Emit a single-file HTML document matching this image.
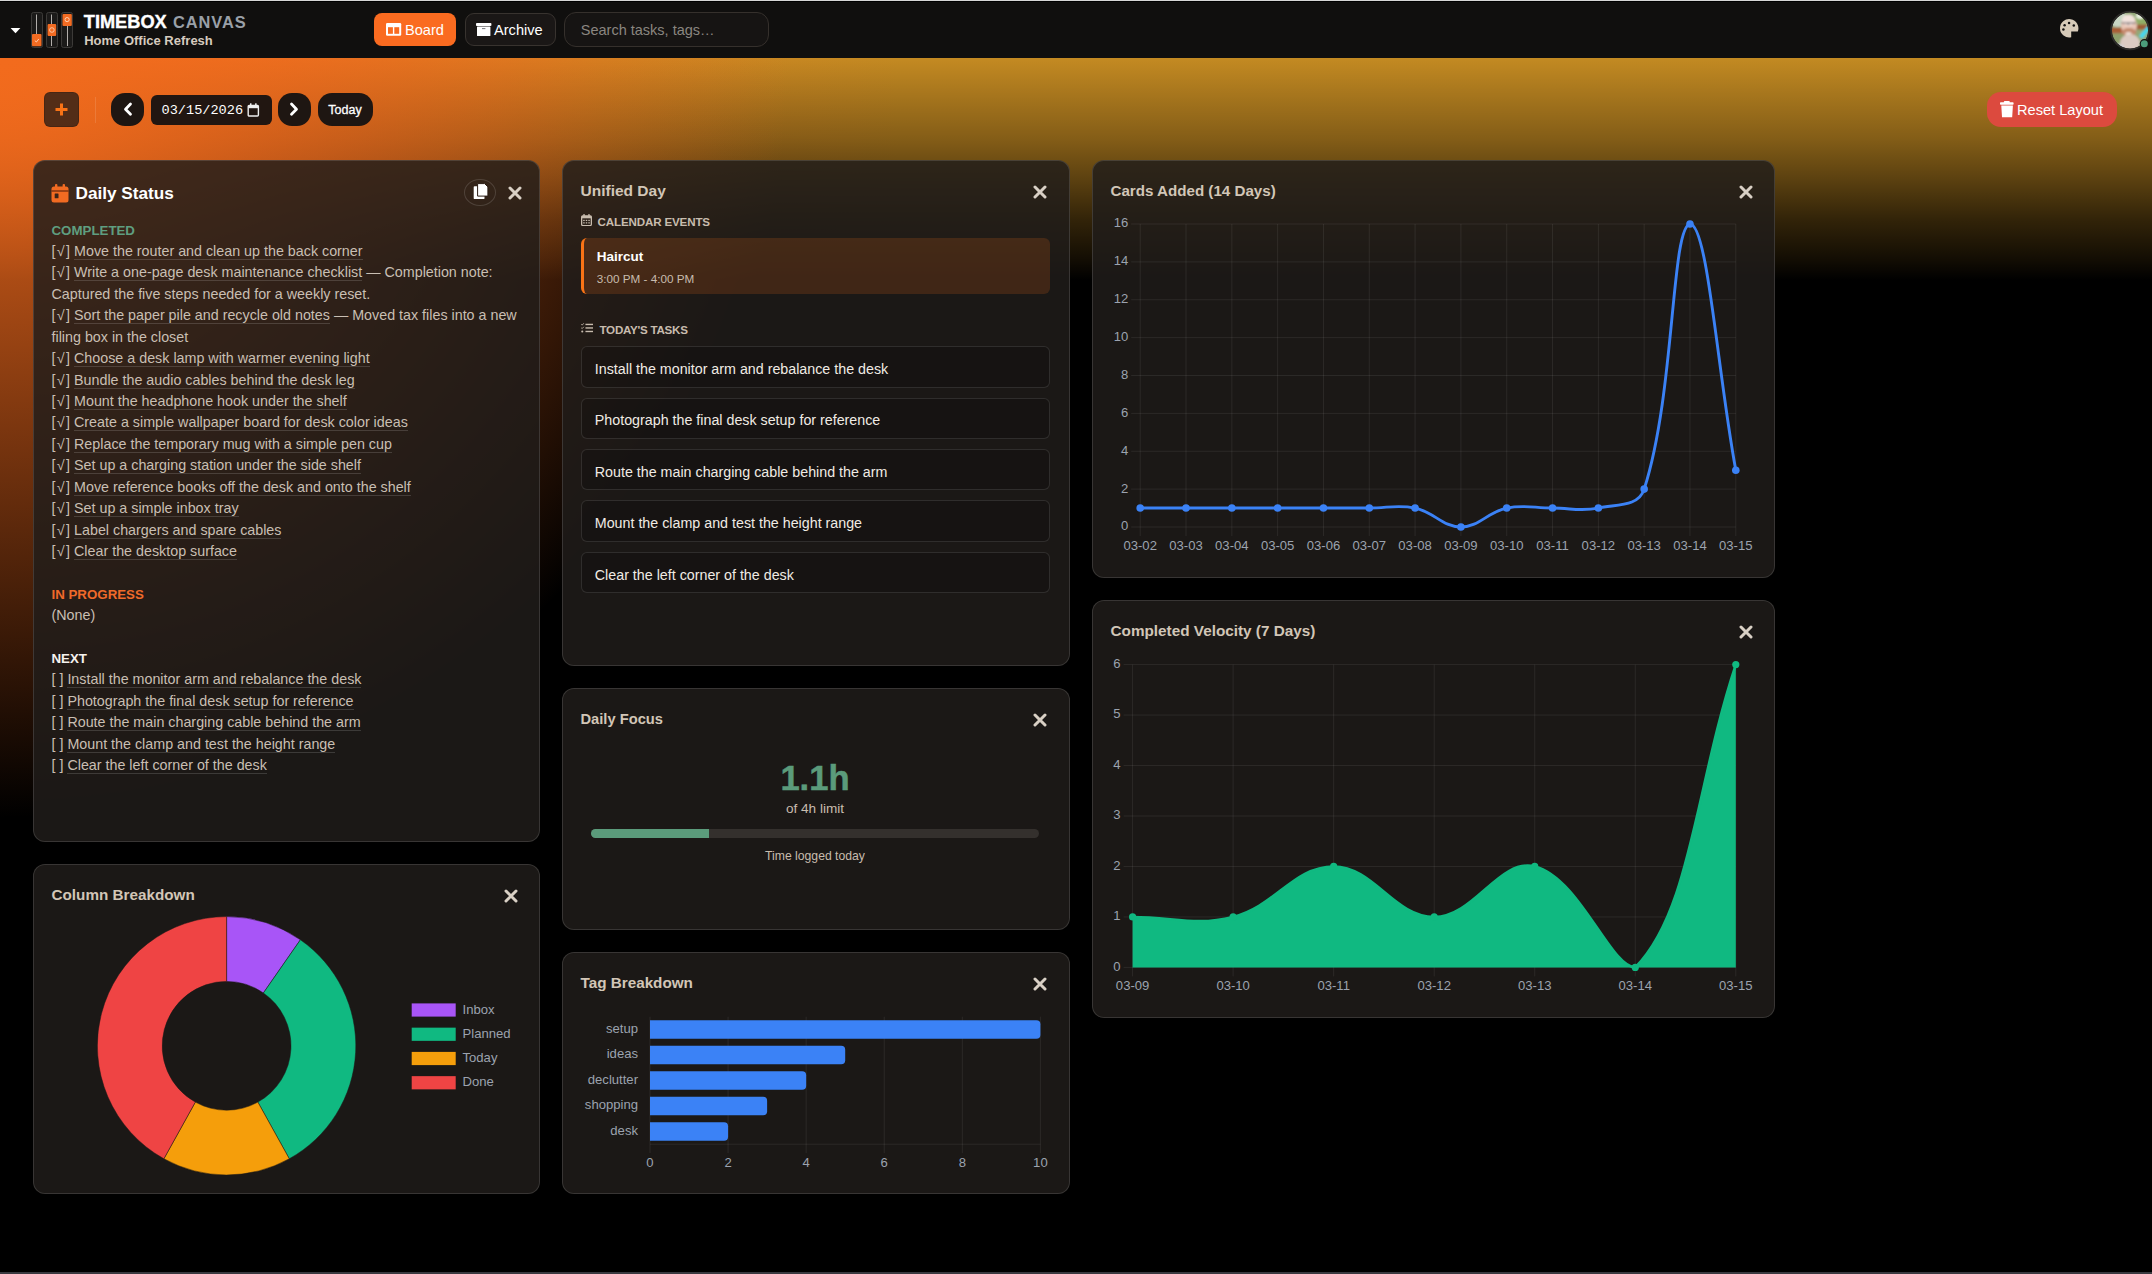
<!DOCTYPE html>
<html><head><meta charset="utf-8">
<style>
*{box-sizing:border-box;margin:0;padding:0}
html,body{width:2152px;height:1274px;overflow:hidden;background:#000;font-family:"Liberation Sans", sans-serif}
#bg{position:absolute;left:0;top:58px;width:2152px;height:1216px;
 background:
  radial-gradient(ellipse 790px 760px at 0px 0px, rgba(242,107,29,1) 0%, rgba(240,105,29,0.5) 50%, rgba(240,105,29,0) 100%),
  linear-gradient(to bottom, rgba(0,0,0,0) 0px, rgba(0,0,0,0.14) 35px, rgba(0,0,0,0.32) 80px, rgba(0,0,0,0.53) 121px, rgba(0,0,0,0.74) 161px, rgba(0,0,0,0.9) 201px, #000 222px),
  linear-gradient(to right, #f26b1d 0px, #e27421 300px, #cf8421 600px, #c48a22 900px, #c28a22 2152px);
}
#topline{position:absolute;left:0;top:0;width:2152px;height:1px;background:#d6d6d6}
#hdr{position:absolute;left:0;top:1px;width:2152px;height:57px;background:#100f0e;border-top:1px solid #000}
#botline{position:absolute;left:0;top:1272px;width:2152px;height:2px;background:#3a3a40}
.abs{position:absolute}
.panel{position:absolute;border-radius:12px;background:rgba(33,29,26,0.83);box-shadow:inset 0 0 0 1px rgba(255,255,255,0.13)}
.ptitle{position:absolute;left:18.5px;top:20.8px;font-size:15.2px;font-weight:bold;color:#d2c6b7;white-space:nowrap;line-height:20px}
.xi{position:absolute}
.ct{font-family:"Liberation Sans", sans-serif;font-size:13.1px;fill:#9ca3af}
#status{position:absolute;left:18.5px;top:59.6px;width:480px;color:#c9bfb3;font-size:14.3px}
.ln{height:21.43px;line-height:21.43px;white-space:nowrap}
.ln u{text-decoration:none;border-bottom:1px solid rgba(255,255,255,0.15);padding-bottom:0px}
.ck{display:inline-block;width:10.6px;text-align:center}
.sec{font-weight:bold;font-size:13.3px}
.g{color:#5f9e80}.o{color:#f06a2a}.w{color:#f5f2ee}
.task{position:absolute;left:19px;width:469px;height:41.4px;border:1px solid rgba(255,255,255,0.11);border-radius:6px;background:rgba(0,0,0,0.18);
 font-size:14.28px;color:#f0ebe4;padding-left:12.8px;padding-top:11.9px;line-height:20px;white-space:nowrap}
.btn{position:absolute;display:flex;align-items:center;justify-content:center}
</style></head><body>
<div id="bg"></div>
<div id="topline"></div>
<div id="hdr"></div>

<!-- header content -->
<svg class="abs" style="left:0;top:0" width="300" height="58" viewBox="0 0 300 58">
 <path d="M10.6 28 L20.4 28 L15.5 33.3 Z" fill="#fff"/>
 <g stroke="#3c3a38" stroke-width="1" fill="#1b1a19">
  <rect x="31.5" y="12.5" width="11" height="35" rx="2"/>
  <rect x="46.5" y="12.5" width="11" height="35" rx="2"/>
  <rect x="61.5" y="12.5" width="11" height="35" rx="2"/>
 </g>
 <g stroke="#c4c0bc" stroke-width="0.9">
  <line x1="36.5" y1="14.5" x2="36.5" y2="46"/>
  <line x1="51.5" y1="14.5" x2="51.5" y2="46"/>
  <line x1="67.5" y1="14.5" x2="67.5" y2="46"/>
 </g>
 <rect x="32" y="34" width="9.5" height="12.3" rx="1" fill="#f26b22"/>
 <path d="M34.8 40.6 L36.4 42 L38.8 39" stroke="#ffd9c0" stroke-width="0.9" fill="none"/>
 <rect x="47.6" y="24" width="8.6" height="12" rx="1" fill="#f26b22"/>
 <circle cx="51.9" cy="30" r="2.3" stroke="#ffd9c0" stroke-width="0.8" fill="none"/>
 <rect x="62.5" y="13.9" width="9.3" height="12" rx="1" fill="#f26b22"/>
 <circle cx="67.1" cy="19.6" r="2.1" stroke="#ffd9c0" stroke-width="0.9" fill="none"/>
</svg>
<div class="abs" style="left:83.8px;top:11.6px;font-size:18.2px;font-weight:bold;color:#fff;letter-spacing:0px;-webkit-text-stroke:0.4px #fff;line-height:20px;white-space:nowrap">TIMEBOX</div>
<div class="abs" style="left:173px;top:11.8px;font-size:16.4px;font-weight:bold;color:#9aa0a8;letter-spacing:0.94px;line-height:20px;white-space:nowrap">CANVAS</div>
<div class="abs" style="left:84.2px;top:33px;font-size:13px;font-weight:bold;color:#d6cbbf;line-height:16px;white-space:nowrap">Home Office Refresh</div>

<div class="abs" style="left:374px;top:13px;width:82px;height:33px;border-radius:8px;background:#fa6b20"></div>
<svg class="abs" style="left:385.8px;top:23px" width="16" height="13" viewBox="0 0 16 13"><rect x="0" y="0" width="15.2" height="12.7" rx="1.2" fill="#fff"/><rect x="2" y="4.2" width="4.9" height="6.6" fill="#fa6b20"/><rect x="8.3" y="4.2" width="4.9" height="6.6" fill="#fa6b20"/></svg>
<div class="abs" style="left:405px;top:20.8px;font-size:14.6px;color:#fff;line-height:18px">Board</div>

<div class="abs" style="left:465px;top:13px;width:91px;height:33px;border-radius:9px;background:#1a1716;border:1px solid #38332f"></div>
<svg class="abs" style="left:476.4px;top:23px" width="16" height="14" viewBox="0 0 16 14"><rect x="0" y="0" width="15.4" height="3" rx="0.8" fill="#fff"/><rect x="1" y="3.5" width="13.4" height="9.5" rx="0.6" fill="#fff"/><rect x="6" y="5.2" width="3.4" height="0.9" fill="#6a6a70"/></svg>
<div class="abs" style="left:494px;top:20.8px;font-size:14.6px;color:#fff;line-height:18px">Archive</div>

<div class="abs" style="left:564px;top:12px;width:205px;height:35px;border-radius:12px;background:#161413;border:1px solid #35302c"></div>
<div class="abs" style="left:580.8px;top:20.5px;font-size:14.5px;color:#8a8680;line-height:18px;white-space:nowrap">Search tasks, tags…</div>

<svg class="abs" style="left:2059.8px;top:18.5px" width="19" height="19" viewBox="0 0 19 19">
 <path d="M11.2 18.28 A9.2 9.2 0 1 1 17.79 12.6 L11.2 12.6 Z" fill="#d6cab8"/>
 <circle cx="9.07" cy="3.96" r="1.25" fill="#121110"/><circle cx="4.6" cy="6.3" r="1.25" fill="#121110"/><circle cx="13.8" cy="6.4" r="1.25" fill="#121110"/><circle cx="3.4" cy="10.6" r="1.25" fill="#121110"/>
</svg>
<svg class="abs" style="left:2110px;top:9.5px" width="42" height="42" viewBox="0 0 42 42">
 <defs><clipPath id="avc"><circle cx="20" cy="20.5" r="18.2"/></clipPath><filter id="avb" x="-20%" y="-20%" width="140%" height="140%"><feGaussianBlur stdDeviation="0.9"/></filter></defs>
 <g clip-path="url(#avc)"><g filter="url(#avb)">
  <rect x="0" y="0" width="42" height="42" fill="#93a877"/>
  <ellipse cx="8" cy="9" rx="9" ry="8" fill="#c9d6c4"/>
  <ellipse cx="33" cy="11" rx="8" ry="9" fill="#8fae66"/>
  <ellipse cx="30" cy="6" rx="4" ry="3" fill="#e8efe0"/>
  <rect x="0" y="17.5" width="16" height="6" fill="#a85c36"/>
  <rect x="24" y="14.5" width="18" height="5" fill="#9e5a34"/>
  <rect x="0" y="23.5" width="14" height="20" fill="#8e9f6c"/>
  <path d="M38 15.5 L41 18 L32 29 L29 26 Z" fill="#3fd8f0"/>
  <ellipse cx="19" cy="15.5" rx="8" ry="9.5" fill="#e9c7b8"/>
  <ellipse cx="18.5" cy="10" rx="6.5" ry="5.5" fill="#f3e3dd"/>
  <path d="M11.5 13 H26 M18.3 13 V15" stroke="#5a5258" stroke-width="1"/>
  <ellipse cx="19" cy="22" rx="7.5" ry="4" fill="#c48a6e"/>
  <ellipse cx="18.5" cy="23.5" rx="3.2" ry="1.6" fill="#f2e2da"/>
  <ellipse cx="20" cy="33" rx="10" ry="9" fill="#dccbc3"/>
  <ellipse cx="8" cy="38" rx="6" ry="4" fill="#cfd3dc"/>
 </g></g>
 <circle cx="20" cy="20.5" r="18.9" fill="none" stroke="#2d2b29" stroke-width="1.8"/>
 <circle cx="34.3" cy="33.7" r="4.6" fill="#121110"/>
 <circle cx="34.3" cy="33.7" r="3.5" fill="#4b9b7a"/>
</svg>

<!-- controls -->
<div class="abs" style="left:44px;top:92px;width:34.5px;height:34.5px;border-radius:6px;background:rgba(40,28,22,0.78);border:1px solid rgba(0,0,0,0.15)"></div>
<svg class="abs" style="left:54px;top:101.5px" width="15" height="15" viewBox="0 0 15 15"><path d="M7.5 1.5V13.5M1.5 7.5H13.5" stroke="#f97316" stroke-width="3"/></svg>
<div class="abs" style="left:95px;top:97px;width:1px;height:26px;background:rgba(255,255,255,0.12)"></div>
<div class="abs" style="left:111px;top:93px;width:33px;height:32.5px;border-radius:14px;background:#1e1612"></div>
<svg class="abs" style="left:121.7px;top:101px" width="12" height="16" viewBox="0 0 12 16"><path d="M8.5 3L3.5 8.2L8.5 13.3" stroke="#fff" stroke-width="2.8" fill="none" stroke-linecap="round" stroke-linejoin="round"/></svg>
<div class="abs" style="left:151.3px;top:95px;width:120.5px;height:30px;border-radius:6px;background:#211611"></div>
<div class="abs" style="left:161.5px;top:101.8px;font-family:'Liberation Mono',monospace;font-size:13.6px;color:#fff;line-height:18px;white-space:nowrap;letter-spacing:0px">03/15/2026</div>
<svg class="abs" style="left:246.5px;top:103px" width="13" height="14" viewBox="0 0 13 14"><rect x="1.2" y="2.4" width="10.2" height="10.6" rx="1" fill="none" stroke="#eee" stroke-width="1.4"/><rect x="1.2" y="2.4" width="10.2" height="2.8" fill="#eee"/><rect x="3" y="0.3" width="1.5" height="3" fill="#eee"/><rect x="8.1" y="0.3" width="1.5" height="3" fill="#eee"/></svg>
<div class="abs" style="left:278px;top:93px;width:32.5px;height:32.5px;border-radius:14px;background:#1e1612"></div>
<svg class="abs" style="left:288.3px;top:101px" width="12" height="16" viewBox="0 0 12 16"><path d="M3.5 3L8.5 8.2L3.5 13.3" stroke="#fff" stroke-width="2.8" fill="none" stroke-linecap="round" stroke-linejoin="round"/></svg>
<div class="abs" style="left:318px;top:93px;width:54.5px;height:32.5px;border-radius:14px;background:#1e1612"></div>
<div class="abs" style="left:328.3px;top:100.5px;font-size:12.5px;color:#fff;line-height:18px;-webkit-text-stroke:0.3px #fff">Today</div>

<div class="abs" style="left:1987px;top:92px;width:130px;height:35px;border-radius:14px;background:#dc4a3e"></div>
<svg class="abs" style="left:2000px;top:101px" width="14" height="17" viewBox="0 0 14 17"><rect x="3.8" y="0" width="6" height="2.4" rx="1" fill="#fff"/><rect x="0" y="1.3" width="13.6" height="2.5" rx="0.8" fill="#fff"/><path d="M1.3 4.4 H12.9 L12.2 16.3 H2 Z" fill="#fff"/></svg>
<div class="abs" style="left:2017px;top:100.5px;font-size:14.6px;color:#fff;line-height:18px;white-space:nowrap">Reset Layout</div>

<!-- panels -->
<div class="panel" style="left:33px;top:160px;width:507px;height:682px">
 <svg class="abs" style="left:17.5px;top:23.5px" width="18" height="19" viewBox="0 0 18 19"><rect x="0.5" y="2.5" width="17" height="16" rx="2.5" fill="#f26b22"/><rect x="4" y="0" width="2.4" height="4" rx="1" fill="#f26b22"/><rect x="11.6" y="0" width="2.4" height="4" rx="1" fill="#f26b22"/><rect x="0.5" y="6.5" width="17" height="1" fill="#4a1a08"/><rect x="3.7" y="9.6" width="3.8" height="4.6" rx="0.5" fill="#3a2418"/></svg>
 <div class="abs" style="left:42.5px;top:22px;font-size:17.2px;font-weight:bold;color:#fff;line-height:22px;white-space:nowrap">Daily Status</div>
 <div class="abs" style="left:430.5px;top:18.5px;width:32px;height:27.5px;border-radius:50%;border:1px solid rgba(255,255,255,0.14)"></div>
 <svg class="abs" style="left:439.5px;top:23px" width="16" height="17" viewBox="0 0 16 17"><rect x="0.7" y="3.2" width="10.8" height="12.9" rx="0.9" fill="#fff"/><path d="M4.6 0.6 H11.6 L14.9 3.9 V13.1 H4.6 Z" fill="#fff" stroke="#2a1c14" stroke-width="1"/></svg>
 <svg class="abs" style="left:475.4px;top:25.7px" width="14" height="14" viewBox="0 0 14 14"><path d="M2 2L12 12M12 2L2 12" stroke="#d9d0c5" stroke-width="3" stroke-linecap="round"/></svg>
 <div id="status">
<div class="ln sec g">COMPLETED</div>
<div class="ln">[<span class="ck">√</span>] <u>Move the router and clean up the back corner</u></div>
<div class="ln">[<span class="ck">√</span>] <u>Write a one-page desk maintenance checklist</u> — Completion note:</div>
<div class="ln">Captured the five steps needed for a weekly reset.</div>
<div class="ln">[<span class="ck">√</span>] <u>Sort the paper pile and recycle old notes</u> — Moved tax files into a new</div>
<div class="ln">filing box in the closet</div>
<div class="ln">[<span class="ck">√</span>] <u>Choose a desk lamp with warmer evening light</u></div>
<div class="ln">[<span class="ck">√</span>] <u>Bundle the audio cables behind the desk leg</u></div>
<div class="ln">[<span class="ck">√</span>] <u>Mount the headphone hook under the shelf</u></div>
<div class="ln">[<span class="ck">√</span>] <u>Create a simple wallpaper board for desk color ideas</u></div>
<div class="ln">[<span class="ck">√</span>] <u>Replace the temporary mug with a simple pen cup</u></div>
<div class="ln">[<span class="ck">√</span>] <u>Set up a charging station under the side shelf</u></div>
<div class="ln">[<span class="ck">√</span>] <u>Move reference books off the desk and onto the shelf</u></div>
<div class="ln">[<span class="ck">√</span>] <u>Set up a simple inbox tray</u></div>
<div class="ln">[<span class="ck">√</span>] <u>Label chargers and spare cables</u></div>
<div class="ln">[<span class="ck">√</span>] <u>Clear the desktop surface</u></div>
<div class="ln"></div>
<div class="ln sec o">IN PROGRESS</div>
<div class="ln">(None)</div>
<div class="ln"></div>
<div class="ln sec w">NEXT</div>
<div class="ln">[ ] <u>Install the monitor arm and rebalance the desk</u></div>
<div class="ln">[ ] <u>Photograph the final desk setup for reference</u></div>
<div class="ln">[ ] <u>Route the main charging cable behind the arm</u></div>
<div class="ln">[ ] <u>Mount the clamp and test the height range</u></div>
<div class="ln">[ ] <u>Clear the left corner of the desk</u></div>
 </div>
</div>

<div class="panel" style="left:33px;top:864px;width:507px;height:330px">
 <div class="ptitle" style="font-size:15.25px">Column Breakdown</div>
 <svg class="abs" style="left:471px;top:24.5px" width="14" height="14" viewBox="0 0 14 14"><path d="M2 2L12 12M12 2L2 12" stroke="#d9d0c5" stroke-width="3" stroke-linecap="round"/></svg>
</div>

<div class="panel" style="left:562px;top:160px;width:508px;height:506px">
 <div class="ptitle" style="font-size:15.5px">Unified Day</div>
 <svg class="abs" style="left:471px;top:24.5px" width="14" height="14" viewBox="0 0 14 14"><path d="M2 2L12 12M12 2L2 12" stroke="#d9d0c5" stroke-width="3" stroke-linecap="round"/></svg>
 <svg class="abs" style="left:18.8px;top:54.3px" width="11" height="12.2" viewBox="0 0 12 13" preserveAspectRatio="none"><rect x="0.7" y="2" width="10.6" height="10.3" rx="1.3" fill="none" stroke="#c8bcae" stroke-width="1.4"/><rect x="0.7" y="2" width="10.6" height="2.6" fill="#c8bcae"/><rect x="2.6" y="0" width="1.4" height="2.6" fill="#c8bcae"/><rect x="8" y="0" width="1.4" height="2.6" fill="#c8bcae"/><g fill="#c8bcae"><rect x="2.4" y="6.2" width="1.6" height="1.3"/><rect x="5.2" y="6.2" width="1.6" height="1.3"/><rect x="8" y="6.2" width="1.6" height="1.3"/><rect x="2.4" y="8.8" width="1.6" height="1.3"/><rect x="5.2" y="8.8" width="1.6" height="1.3"/><rect x="8" y="8.8" width="1.6" height="1.3"/></g></svg>
 <div class="abs" style="left:35.5px;top:55px;font-size:11.6px;font-weight:bold;color:#c8bcae;line-height:14px;white-space:nowrap;letter-spacing:-0.15px">CALENDAR EVENTS</div>
 <div class="abs" style="left:18.5px;top:78px;width:469.5px;height:55.5px;border-radius:6px;background:rgba(249,115,22,0.17);border-left:3px solid #f97316"></div>
 <div class="abs" style="left:34.8px;top:89px;font-size:13.5px;font-weight:bold;color:#fff;line-height:16px">Haircut</div>
 <div class="abs" style="left:34.8px;top:112px;font-size:11.7px;color:#c8bcae;line-height:14px;white-space:nowrap">3:00 PM - 4:00 PM</div>
 <svg class="abs" style="left:18.7px;top:163.3px" width="12.6" height="10.2" viewBox="0 0 13 11" preserveAspectRatio="none"><g fill="#c8bcae"><rect x="4.6" y="0.8" width="8.2" height="1.5"/><rect x="4.6" y="4.6" width="8.2" height="1.5"/><rect x="4.6" y="8.4" width="8.2" height="1.5"/><circle cx="1.3" cy="9.1" r="1.1"/></g><path d="M0.3 1.4 L1.2 2.3 L2.9 0.3 M0.3 5.2 L1.2 6.1 L2.9 4.1" stroke="#c8bcae" stroke-width="0.9" fill="none"/></svg>
 <div class="abs" style="left:37.5px;top:163px;font-size:11.6px;font-weight:bold;color:#c8bcae;line-height:14px;white-space:nowrap;letter-spacing:-0.25px">TODAY'S TASKS</div>
<div class="task" style="top:186.20px">Install the monitor arm and rebalance the desk</div>
<div class="task" style="top:237.60px">Photograph the final desk setup for reference</div>
<div class="task" style="top:289.00px">Route the main charging cable behind the arm</div>
<div class="task" style="top:340.40px">Mount the clamp and test the height range</div>
<div class="task" style="top:391.80px">Clear the left corner of the desk</div>
</div>

<div class="panel" style="left:562px;top:688px;width:508px;height:242px">
 <div class="ptitle" style="font-size:14.7px">Daily Focus</div>
 <svg class="abs" style="left:471px;top:24.5px" width="14" height="14" viewBox="0 0 14 14"><path d="M2 2L12 12M12 2L2 12" stroke="#d9d0c5" stroke-width="3" stroke-linecap="round"/></svg>
 <div class="abs" style="left:0;top:70.1px;width:506px;text-align:center;font-size:34.6px;font-weight:bold;color:#5b9b7b;line-height:40px;-webkit-text-stroke:0.5px #5b9b7b">1.1h</div>
 <div class="abs" style="left:0;top:112.5px;width:506px;text-align:center;font-size:13.6px;color:#c8bcae;line-height:16px">of 4h limit</div>
 <div class="abs" style="left:29px;top:141px;width:448px;height:8.5px;border-radius:5px;background:#34302d;overflow:hidden"><div style="width:118px;height:100%;background:#5b9b7b"></div></div>
 <div class="abs" style="left:0;top:160px;width:506px;text-align:center;font-size:12.2px;color:#c8bcae;line-height:16px">Time logged today</div>
</div>

<div class="panel" style="left:562px;top:952px;width:508px;height:242px">
 <div class="ptitle" style="font-size:15.25px">Tag Breakdown</div>
 <svg class="abs" style="left:471px;top:24.5px" width="14" height="14" viewBox="0 0 14 14"><path d="M2 2L12 12M12 2L2 12" stroke="#d9d0c5" stroke-width="3" stroke-linecap="round"/></svg>
</div>

<div class="panel" style="left:1092px;top:160px;width:683px;height:418px">
 <div class="ptitle" style="font-size:15.15px">Cards Added (14 Days)</div>
 <svg class="abs" style="left:646.5px;top:24.5px" width="14" height="14" viewBox="0 0 14 14"><path d="M2 2L12 12M12 2L2 12" stroke="#d9d0c5" stroke-width="3" stroke-linecap="round"/></svg>
</div>

<div class="panel" style="left:1092px;top:600px;width:683px;height:418px">
 <div class="ptitle" style="font-size:15.3px">Completed Velocity (7 Days)</div>
 <svg class="abs" style="left:646.5px;top:24.5px" width="14" height="14" viewBox="0 0 14 14"><path d="M2 2L12 12M12 2L2 12" stroke="#d9d0c5" stroke-width="3" stroke-linecap="round"/></svg>
</div>

<svg class="abs" style="left:0;top:0;pointer-events:none" width="2152" height="1274" viewBox="0 0 2152 1274">
<line x1="1140.20" y1="224.00" x2="1140.20" y2="536.00" stroke="rgba(255,255,255,0.075)" stroke-width="1"/>
<text x="1140.20" y="550.00" text-anchor="middle" class="ct">03-02</text>
<line x1="1186.02" y1="224.00" x2="1186.02" y2="536.00" stroke="rgba(255,255,255,0.075)" stroke-width="1"/>
<text x="1186.02" y="550.00" text-anchor="middle" class="ct">03-03</text>
<line x1="1231.83" y1="224.00" x2="1231.83" y2="536.00" stroke="rgba(255,255,255,0.075)" stroke-width="1"/>
<text x="1231.83" y="550.00" text-anchor="middle" class="ct">03-04</text>
<line x1="1277.65" y1="224.00" x2="1277.65" y2="536.00" stroke="rgba(255,255,255,0.075)" stroke-width="1"/>
<text x="1277.65" y="550.00" text-anchor="middle" class="ct">03-05</text>
<line x1="1323.46" y1="224.00" x2="1323.46" y2="536.00" stroke="rgba(255,255,255,0.075)" stroke-width="1"/>
<text x="1323.46" y="550.00" text-anchor="middle" class="ct">03-06</text>
<line x1="1369.28" y1="224.00" x2="1369.28" y2="536.00" stroke="rgba(255,255,255,0.075)" stroke-width="1"/>
<text x="1369.28" y="550.00" text-anchor="middle" class="ct">03-07</text>
<line x1="1415.09" y1="224.00" x2="1415.09" y2="536.00" stroke="rgba(255,255,255,0.075)" stroke-width="1"/>
<text x="1415.09" y="550.00" text-anchor="middle" class="ct">03-08</text>
<line x1="1460.91" y1="224.00" x2="1460.91" y2="536.00" stroke="rgba(255,255,255,0.075)" stroke-width="1"/>
<text x="1460.91" y="550.00" text-anchor="middle" class="ct">03-09</text>
<line x1="1506.72" y1="224.00" x2="1506.72" y2="536.00" stroke="rgba(255,255,255,0.075)" stroke-width="1"/>
<text x="1506.72" y="550.00" text-anchor="middle" class="ct">03-10</text>
<line x1="1552.54" y1="224.00" x2="1552.54" y2="536.00" stroke="rgba(255,255,255,0.075)" stroke-width="1"/>
<text x="1552.54" y="550.00" text-anchor="middle" class="ct">03-11</text>
<line x1="1598.35" y1="224.00" x2="1598.35" y2="536.00" stroke="rgba(255,255,255,0.075)" stroke-width="1"/>
<text x="1598.35" y="550.00" text-anchor="middle" class="ct">03-12</text>
<line x1="1644.17" y1="224.00" x2="1644.17" y2="536.00" stroke="rgba(255,255,255,0.075)" stroke-width="1"/>
<text x="1644.17" y="550.00" text-anchor="middle" class="ct">03-13</text>
<line x1="1689.98" y1="224.00" x2="1689.98" y2="536.00" stroke="rgba(255,255,255,0.075)" stroke-width="1"/>
<text x="1689.98" y="550.00" text-anchor="middle" class="ct">03-14</text>
<line x1="1735.80" y1="224.00" x2="1735.80" y2="536.00" stroke="rgba(255,255,255,0.075)" stroke-width="1"/>
<text x="1735.80" y="550.00" text-anchor="middle" class="ct">03-15</text>
<line x1="1131.20" y1="527.00" x2="1735.80" y2="527.00" stroke="rgba(255,255,255,0.075)" stroke-width="1"/>
<text x="1128.30" y="530.40" text-anchor="end" class="ct">0</text>
<line x1="1131.20" y1="489.12" x2="1735.80" y2="489.12" stroke="rgba(255,255,255,0.075)" stroke-width="1"/>
<text x="1128.30" y="492.52" text-anchor="end" class="ct">2</text>
<line x1="1131.20" y1="451.25" x2="1735.80" y2="451.25" stroke="rgba(255,255,255,0.075)" stroke-width="1"/>
<text x="1128.30" y="454.65" text-anchor="end" class="ct">4</text>
<line x1="1131.20" y1="413.38" x2="1735.80" y2="413.38" stroke="rgba(255,255,255,0.075)" stroke-width="1"/>
<text x="1128.30" y="416.77" text-anchor="end" class="ct">6</text>
<line x1="1131.20" y1="375.50" x2="1735.80" y2="375.50" stroke="rgba(255,255,255,0.075)" stroke-width="1"/>
<text x="1128.30" y="378.90" text-anchor="end" class="ct">8</text>
<line x1="1131.20" y1="337.62" x2="1735.80" y2="337.62" stroke="rgba(255,255,255,0.075)" stroke-width="1"/>
<text x="1128.30" y="341.02" text-anchor="end" class="ct">10</text>
<line x1="1131.20" y1="299.75" x2="1735.80" y2="299.75" stroke="rgba(255,255,255,0.075)" stroke-width="1"/>
<text x="1128.30" y="303.15" text-anchor="end" class="ct">12</text>
<line x1="1131.20" y1="261.88" x2="1735.80" y2="261.88" stroke="rgba(255,255,255,0.075)" stroke-width="1"/>
<text x="1128.30" y="265.27" text-anchor="end" class="ct">14</text>
<line x1="1131.20" y1="224.00" x2="1735.80" y2="224.00" stroke="rgba(255,255,255,0.075)" stroke-width="1"/>
<text x="1128.30" y="227.40" text-anchor="end" class="ct">16</text>
<path d="M1140.20 508.06 C1158.53 508.06 1167.69 508.06 1186.02 508.06 C1204.34 508.06 1213.50 508.06 1231.83 508.06 C1250.16 508.06 1259.32 508.06 1277.65 508.06 C1295.97 508.06 1305.14 508.06 1323.46 508.06 C1341.79 508.06 1350.95 508.06 1369.28 508.06 C1387.60 508.06 1397.49 504.42 1415.09 508.06 C1434.14 512.00 1442.58 527.00 1460.91 527.00 C1479.23 527.00 1487.67 512.00 1506.72 508.06 C1524.33 504.42 1534.21 508.06 1552.54 508.06 C1570.86 508.06 1580.75 511.70 1598.35 508.06 C1617.40 504.13 1638.47 506.80 1644.17 489.12 C1675.12 393.18 1671.00 227.92 1689.98 224.00 C1707.65 224.00 1717.47 371.71 1735.80 470.19" fill="none" stroke="#3b82f6" stroke-width="2.9" stroke-linejoin="round"/>
<circle cx="1140.20" cy="508.06" r="3.8" fill="#3b82f6"/>
<circle cx="1186.02" cy="508.06" r="3.8" fill="#3b82f6"/>
<circle cx="1231.83" cy="508.06" r="3.8" fill="#3b82f6"/>
<circle cx="1277.65" cy="508.06" r="3.8" fill="#3b82f6"/>
<circle cx="1323.46" cy="508.06" r="3.8" fill="#3b82f6"/>
<circle cx="1369.28" cy="508.06" r="3.8" fill="#3b82f6"/>
<circle cx="1415.09" cy="508.06" r="3.8" fill="#3b82f6"/>
<circle cx="1460.91" cy="527.00" r="3.8" fill="#3b82f6"/>
<circle cx="1506.72" cy="508.06" r="3.8" fill="#3b82f6"/>
<circle cx="1552.54" cy="508.06" r="3.8" fill="#3b82f6"/>
<circle cx="1598.35" cy="508.06" r="3.8" fill="#3b82f6"/>
<circle cx="1644.17" cy="489.12" r="3.8" fill="#3b82f6"/>
<circle cx="1689.98" cy="224.00" r="3.8" fill="#3b82f6"/>
<circle cx="1735.80" cy="470.19" r="3.8" fill="#3b82f6"/>
<line x1="1132.60" y1="664.60" x2="1132.60" y2="976.40" stroke="rgba(255,255,255,0.075)" stroke-width="1"/>
<text x="1132.60" y="990.00" text-anchor="middle" class="ct">03-09</text>
<line x1="1233.13" y1="664.60" x2="1233.13" y2="976.40" stroke="rgba(255,255,255,0.075)" stroke-width="1"/>
<text x="1233.13" y="990.00" text-anchor="middle" class="ct">03-10</text>
<line x1="1333.67" y1="664.60" x2="1333.67" y2="976.40" stroke="rgba(255,255,255,0.075)" stroke-width="1"/>
<text x="1333.67" y="990.00" text-anchor="middle" class="ct">03-11</text>
<line x1="1434.20" y1="664.60" x2="1434.20" y2="976.40" stroke="rgba(255,255,255,0.075)" stroke-width="1"/>
<text x="1434.20" y="990.00" text-anchor="middle" class="ct">03-12</text>
<line x1="1534.73" y1="664.60" x2="1534.73" y2="976.40" stroke="rgba(255,255,255,0.075)" stroke-width="1"/>
<text x="1534.73" y="990.00" text-anchor="middle" class="ct">03-13</text>
<line x1="1635.27" y1="664.60" x2="1635.27" y2="976.40" stroke="rgba(255,255,255,0.075)" stroke-width="1"/>
<text x="1635.27" y="990.00" text-anchor="middle" class="ct">03-14</text>
<line x1="1735.80" y1="664.60" x2="1735.80" y2="976.40" stroke="rgba(255,255,255,0.075)" stroke-width="1"/>
<text x="1735.80" y="990.00" text-anchor="middle" class="ct">03-15</text>
<line x1="1123.60" y1="967.40" x2="1735.80" y2="967.40" stroke="rgba(255,255,255,0.075)" stroke-width="1"/>
<text x="1120.60" y="970.80" text-anchor="end" class="ct">0</text>
<line x1="1123.60" y1="916.93" x2="1735.80" y2="916.93" stroke="rgba(255,255,255,0.075)" stroke-width="1"/>
<text x="1120.60" y="920.33" text-anchor="end" class="ct">1</text>
<line x1="1123.60" y1="866.47" x2="1735.80" y2="866.47" stroke="rgba(255,255,255,0.075)" stroke-width="1"/>
<text x="1120.60" y="869.87" text-anchor="end" class="ct">2</text>
<line x1="1123.60" y1="816.00" x2="1735.80" y2="816.00" stroke="rgba(255,255,255,0.075)" stroke-width="1"/>
<text x="1120.60" y="819.40" text-anchor="end" class="ct">3</text>
<line x1="1123.60" y1="765.53" x2="1735.80" y2="765.53" stroke="rgba(255,255,255,0.075)" stroke-width="1"/>
<text x="1120.60" y="768.93" text-anchor="end" class="ct">4</text>
<line x1="1123.60" y1="715.07" x2="1735.80" y2="715.07" stroke="rgba(255,255,255,0.075)" stroke-width="1"/>
<text x="1120.60" y="718.47" text-anchor="end" class="ct">5</text>
<line x1="1123.60" y1="664.60" x2="1735.80" y2="664.60" stroke="rgba(255,255,255,0.075)" stroke-width="1"/>
<text x="1120.60" y="668.00" text-anchor="end" class="ct">6</text>
<path d="M1132.60 916.93 C1172.81 916.93 1195.18 926.46 1233.13 916.93 C1275.60 906.27 1293.45 866.47 1333.67 866.47 C1373.88 866.47 1393.99 916.93 1434.20 916.93 C1474.41 916.93 1499.25 857.56 1534.73 866.47 C1579.67 877.75 1610.44 967.40 1635.27 967.40 C1690.87 911.58 1695.59 785.72 1735.80 664.60 L1735.80 967.40 L1132.60 967.40 Z" fill="#10b981"/>
<path d="M1132.60 916.93 C1172.81 916.93 1195.18 926.46 1233.13 916.93 C1275.60 906.27 1293.45 866.47 1333.67 866.47 C1373.88 866.47 1393.99 916.93 1434.20 916.93 C1474.41 916.93 1499.25 857.56 1534.73 866.47 C1579.67 877.75 1610.44 967.40 1635.27 967.40 C1690.87 911.58 1695.59 785.72 1735.80 664.60" fill="none" stroke="#10b981" stroke-width="2.6"/>
<circle cx="1132.60" cy="916.93" r="3.6" fill="#10b981"/>
<circle cx="1233.13" cy="916.93" r="3.6" fill="#10b981"/>
<circle cx="1333.67" cy="866.47" r="3.6" fill="#10b981"/>
<circle cx="1434.20" cy="916.93" r="3.6" fill="#10b981"/>
<circle cx="1534.73" cy="866.47" r="3.6" fill="#10b981"/>
<circle cx="1635.27" cy="967.40" r="3.6" fill="#10b981"/>
<circle cx="1735.80" cy="664.60" r="3.6" fill="#10b981"/>
<line x1="650.00" y1="1016.70" x2="650.00" y2="1153.20" stroke="rgba(255,255,255,0.075)" stroke-width="1"/>
<text x="650.00" y="1167.00" text-anchor="middle" class="ct">0</text>
<line x1="728.08" y1="1016.70" x2="728.08" y2="1153.20" stroke="rgba(255,255,255,0.075)" stroke-width="1"/>
<text x="728.08" y="1167.00" text-anchor="middle" class="ct">2</text>
<line x1="806.16" y1="1016.70" x2="806.16" y2="1153.20" stroke="rgba(255,255,255,0.075)" stroke-width="1"/>
<text x="806.16" y="1167.00" text-anchor="middle" class="ct">4</text>
<line x1="884.24" y1="1016.70" x2="884.24" y2="1153.20" stroke="rgba(255,255,255,0.075)" stroke-width="1"/>
<text x="884.24" y="1167.00" text-anchor="middle" class="ct">6</text>
<line x1="962.32" y1="1016.70" x2="962.32" y2="1153.20" stroke="rgba(255,255,255,0.075)" stroke-width="1"/>
<text x="962.32" y="1167.00" text-anchor="middle" class="ct">8</text>
<line x1="1040.40" y1="1016.70" x2="1040.40" y2="1153.20" stroke="rgba(255,255,255,0.075)" stroke-width="1"/>
<text x="1040.40" y="1167.00" text-anchor="middle" class="ct">10</text>
<line x1="650.00" y1="1144.20" x2="1040.40" y2="1144.20" stroke="rgba(255,255,255,0.075)" stroke-width="1"/>
<path d="M650.00 1020.27 H1036.40 Q1040.40 1020.27 1040.40 1024.27 V1034.63 Q1040.40 1038.63 1036.40 1038.63 H650.00 Z" fill="#3b82f6"/>
<text x="638.00" y="1032.85" text-anchor="end" class="ct">setup</text>
<path d="M650.00 1045.77 H841.20 Q845.20 1045.77 845.20 1049.77 V1060.13 Q845.20 1064.13 841.20 1064.13 H650.00 Z" fill="#3b82f6"/>
<text x="638.00" y="1058.35" text-anchor="end" class="ct">ideas</text>
<path d="M650.00 1071.27 H802.16 Q806.16 1071.27 806.16 1075.27 V1085.63 Q806.16 1089.63 802.16 1089.63 H650.00 Z" fill="#3b82f6"/>
<text x="638.00" y="1083.85" text-anchor="end" class="ct">declutter</text>
<path d="M650.00 1096.77 H763.12 Q767.12 1096.77 767.12 1100.77 V1111.13 Q767.12 1115.13 763.12 1115.13 H650.00 Z" fill="#3b82f6"/>
<text x="638.00" y="1109.35" text-anchor="end" class="ct">shopping</text>
<path d="M650.00 1122.27 H724.08 Q728.08 1122.27 728.08 1126.27 V1136.63 Q728.08 1140.63 724.08 1140.63 H650.00 Z" fill="#3b82f6"/>
<text x="638.00" y="1134.85" text-anchor="end" class="ct">desk</text>
<path d="M226.60 916.60 A129.20 129.20 0 0 1 300.41 939.76 L263.39 992.94 A64.40 64.40 0 0 0 226.60 981.40 Z" fill="#a855f7" stroke="#1c1916" stroke-width="0.5"/>
<path d="M300.41 939.76 A129.20 129.20 0 0 1 289.30 1158.77 L257.85 1102.11 A64.40 64.40 0 0 0 263.39 992.94 Z" fill="#10b981" stroke="#1c1916" stroke-width="0.5"/>
<path d="M289.30 1158.77 A129.20 129.20 0 0 1 163.90 1158.77 L195.35 1102.11 A64.40 64.40 0 0 0 257.85 1102.11 Z" fill="#f59e0b" stroke="#1c1916" stroke-width="0.5"/>
<path d="M163.90 1158.77 A129.20 129.20 0 0 1 226.60 916.60 L226.60 981.40 A64.40 64.40 0 0 0 195.35 1102.11 Z" fill="#ef4444" stroke="#1c1916" stroke-width="0.5"/>
<rect x="411.7" y="1003.40" width="44" height="13.2" fill="#a855f7"/>
<text x="462.5" y="1013.70" class="ct">Inbox</text>
<rect x="411.7" y="1027.65" width="44" height="13.2" fill="#10b981"/>
<text x="462.5" y="1037.95" class="ct">Planned</text>
<rect x="411.7" y="1051.90" width="44" height="13.2" fill="#f59e0b"/>
<text x="462.5" y="1062.20" class="ct">Today</text>
<rect x="411.7" y="1076.15" width="44" height="13.2" fill="#ef4444"/>
<text x="462.5" y="1086.45" class="ct">Done</text>
</svg>
<div id="botline"></div>
</body></html>
